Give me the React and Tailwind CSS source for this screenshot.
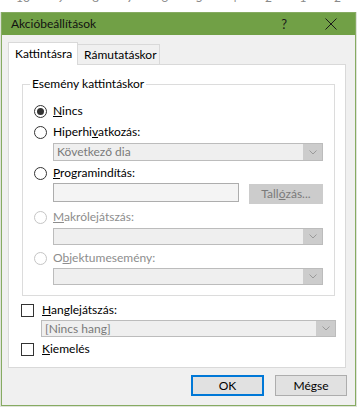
import React from "react";

function Radio({ checked, disabled }) {
    return (
        <span
            className={
                "flex h-[13px] w-[13px] shrink-0 items-center justify-center rounded-full border bg-white " +
                (disabled ? "border-[#c5c5c5]" : "border-[#333333]")
            }
        >
            {checked && <span className="h-[7px] w-[7px] rounded-full bg-[#333333]" />}
        </span>
    );
}

function Checkbox() {
    return <span className="h-[13px] w-[13px] shrink-0 border border-[#333333] bg-white" />;
}

function Chevron() {
    return (
        <svg width="8" height="5" viewBox="0 0 8 5" fill="none">
            <path d="M0.5 0.5 L4 4 L7.5 0.5" stroke="#9a9a9a" strokeWidth="1" />
        </svg>
    );
}

function Combo({ text, className }) {
    return (
        <div className={"flex border border-[#bcbcbc] bg-[#efefef] " + className}>
            <span className="flex-1 truncate pl-[3px] leading-[15px] text-[#7a7a7a]">{text}</span>
            <span className="flex w-[19px] items-center justify-center bg-[#cccccc]">
                <Chevron />
            </span>
        </div>
    );
}

function Option({ label, checked, disabled, className }) {
    return (
        <div className={"flex h-[16px] items-center " + className}>
            <Radio checked={checked} disabled={disabled} />
            <span
                className={
                    "ml-[6px] leading-[16px] " + (disabled ? "text-[#8d8d8d]" : "text-[#000000]")
                }
            >
                {label}
            </span>
        </div>
    );
}

export default function App() {
    return (
        <div className="h-[407px] w-[357px] overflow-hidden bg-[#dfe3da] font-['Lato',sans-serif] text-[12px] text-[#000000]">
            {/* edge of the slide ruler behind the dialog */}
            <div className="h-[12px] overflow-hidden bg-white">
                <div className="-mt-[10px] flex justify-between px-[16px] text-[12px] leading-[16px] text-[#8a8a8a]">
                    <span>10</span>
                    <span>9</span>
                    <span>8</span>
                    <span>7</span>
                    <span>6</span>
                    <span>5</span>
                    <span>4</span>
                    <span>2</span>
                    <span>1</span>
                    <span>2</span>
                </div>
            </div>

            <div className="ml-[1px] flex h-[394px] w-[355px] flex-col border border-[#86ab62] bg-[#f0f0f0]">
                <div className="flex h-[22px] shrink-0 items-center bg-[#71a046] pl-[9px]">
                    <span className="leading-[16px] text-[#111111]">Akcióbeállítások</span>
                    <span className="ml-auto text-[13px] leading-[16px] text-[#1a1a1a]">?</span>
                    <svg className="ml-[38px] mr-[18px]" width="12" height="12" viewBox="0 0 12 12">
                        <path d="M0.5 0.5 L11.5 11.5 M11.5 0.5 L0.5 11.5" stroke="#1a1a1a" strokeWidth="1" />
                    </svg>
                </div>

                <div className="flex flex-1 flex-col pl-[6px] pr-[9px] pt-[7px]">
                    <div className="flex items-end">
                        <div className="relative z-10 -mb-[1px] flex h-[23px] w-[70px] items-center border border-b-0 border-[#d9d9d9] bg-white pl-[6px]">
                            Kattintásra
                        </div>
                        <div className="flex h-[20px] w-[82px] items-center border border-b-0 border-l-0 border-[#d9d9d9] bg-[#f0f0f0] pl-[6px]">
                            Rámutatáskor
                        </div>
                    </div>

                    <div className="flex flex-col border border-[#d9d9d9] bg-white pb-[10px] pl-[12px] pr-[10px] pt-[19px]">
                        <div className="ml-[1px] flex flex-col border border-[#dcdcdc] pb-[10px] pl-[11px] pr-[11px]">
                            <div className="-ml-[4px] -mt-[9px] w-fit bg-white px-[2px] leading-[16px]">
                                Esemény kattintáskor
                            </div>

                            <Option className="mt-[11px]" checked label={<><u>N</u>incs</>} />
                            <Option className="mt-[5px]" label={<>Hiperhi<u>v</u>atkozás:</>} />
                            <Combo className="ml-[19px] mt-[3px] h-[18px]" text="Következő dia" />

                            <Option className="mt-[4px]" label={<><u>P</u>rogramindítás:</>} />
                            <div className="ml-[19px] mt-[2px] flex h-[21px] items-start">
                                <div className="h-[19px] w-[186px] border border-[#adadad] bg-[#f4f4f4]" />
                                <div className="ml-[10px] mt-[1px] flex h-[20px] flex-1 items-center justify-center border border-[#cccccc] bg-[#cccccc] text-[#7a7a7a]">
                                    Tall<u>ó</u>zás...
                                </div>
                            </div>

                            <Option className="mt-[5px]" disabled label={<><u>M</u>akrólejátszás:</>} />
                            <Combo className="ml-[19px] mt-[3px] h-[17px]" text="" />

                            <Option className="mt-[5px]" disabled label={<>O<u>b</u>jektumesemény:</>} />
                            <Combo className="ml-[19px] mt-[2px] h-[17px]" text="" />
                        </div>

                        <div className="mt-[6px] flex h-[16px] items-center">
                            <Checkbox />
                            <span className="ml-[8px] leading-[16px]">
                                <u>H</u>anglejátszás:
                            </span>
                        </div>
                        <Combo className="ml-[20px] mr-[-1px] mt-[2px] h-[17px]" text="[Nincs hang]" />

                        <div className="mt-[4px] flex h-[16px] items-center">
                            <Checkbox />
                            <span className="ml-[8px] leading-[16px]">
                                <u>K</u>iemelés
                            </span>
                        </div>
                    </div>

                    <div className="-mr-[1px] mt-[7px] flex justify-end gap-[11px]">
                        <button className="h-[21px] w-[73px] border-2 border-[#0078d7] bg-[#e1e1e1] leading-[16px] text-[#000000]">
                            OK
                        </button>
                        <button className="h-[21px] w-[72px] border border-[#adadad] bg-[#e1e1e1] leading-[16px] text-[#000000]">
                            Mégse
                        </button>
                    </div>
                </div>
            </div>
        </div>
    );
}
